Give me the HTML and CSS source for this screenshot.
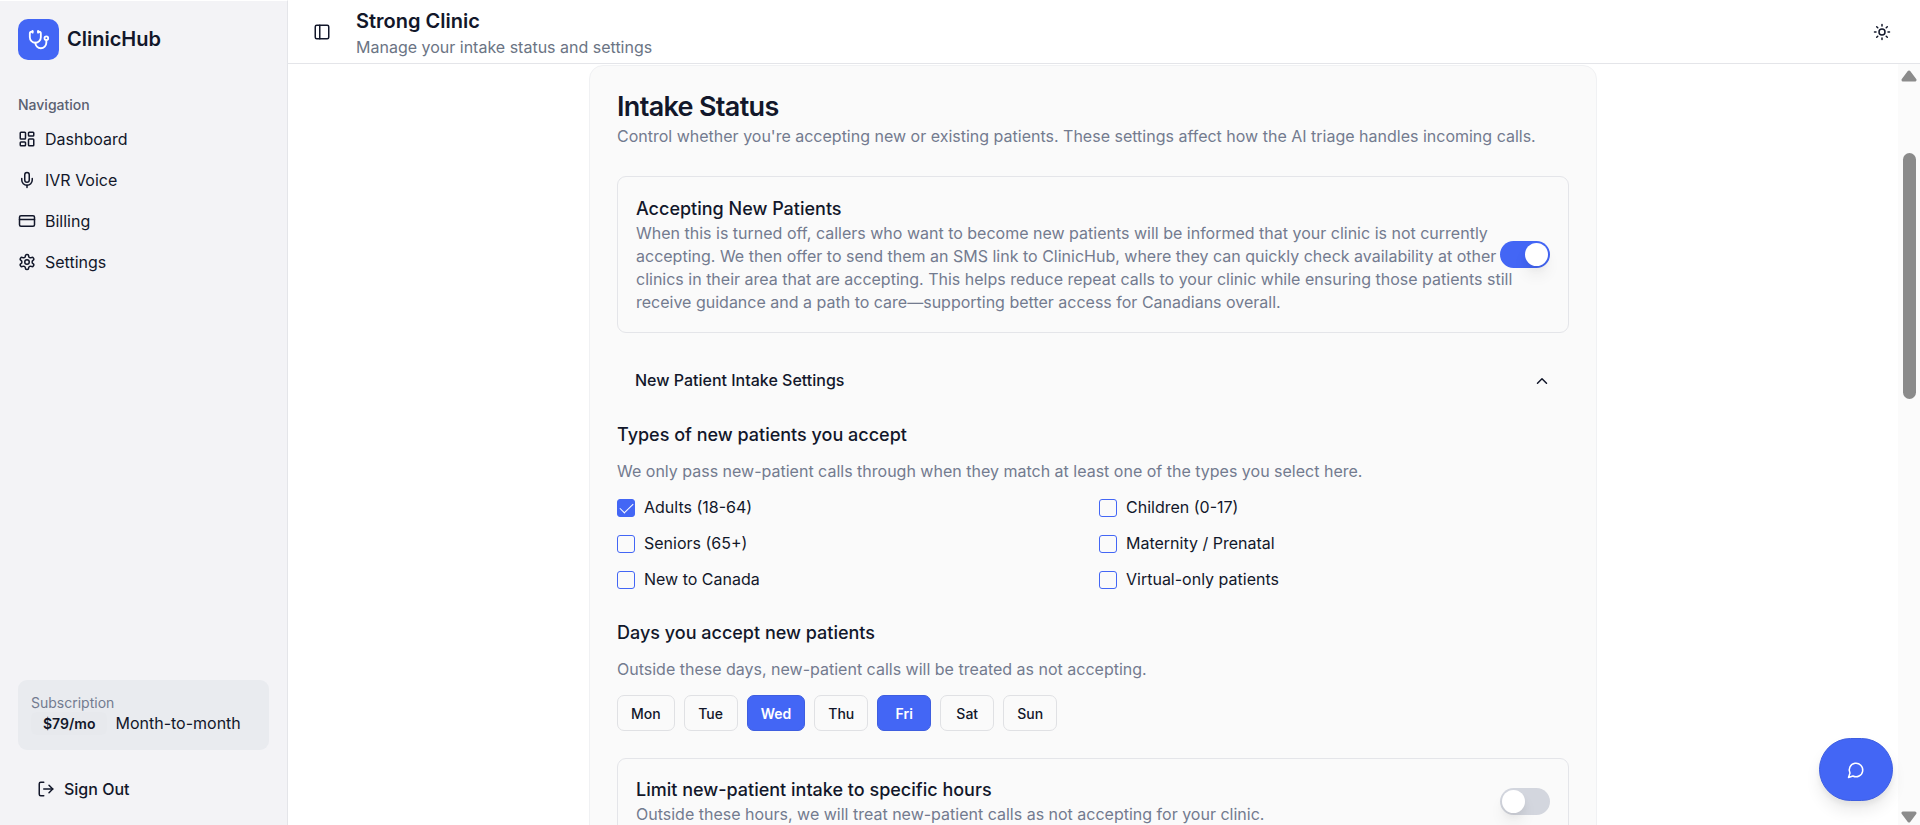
FILE: index.html
```html
<!DOCTYPE html>
<html lang="en">
<head>
<meta charset="utf-8">
<meta name="viewport" content="width=device-width, initial-scale=1">
<title>ClinicHub</title>
<link rel="stylesheet" href="styles.css">
</head>
<body>
<div class="app">
  <aside class="sidebar">
    <div class="brand">
      <span class="brand-mark">
        <svg class="icon icon-brand" viewBox="0 0 24 24"><path d="M11 2v2"/><path d="M5 2v2"/><path d="M5 3H4a2 2 0 0 0-2 2v4a6 6 0 0 0 12 0V5a2 2 0 0 0-2-2h-1"/><path d="M8 15a6 6 0 0 0 12 0v-3"/><circle cx="20" cy="10" r="2"/></svg>
      </span>
      <span class="brand-name">ClinicHub</span>
    </div>
    <nav class="nav" aria-label="Navigation">
      <p class="nav-label">Navigation</p>
      <a class="nav-link" href="#dashboard">
        <svg class="icon" viewBox="0 0 24 24"><rect width="7" height="9" x="3" y="3" rx="1"/><rect width="7" height="5" x="14" y="3" rx="1"/><rect width="7" height="9" x="14" y="12" rx="1"/><rect width="7" height="5" x="3" y="16" rx="1"/></svg>
        Dashboard</a>
      <a class="nav-link" href="#voice">
        <svg class="icon" viewBox="0 0 24 24"><path d="M12 19v3"/><path d="M19 10v2a7 7 0 0 1-14 0v-2"/><rect x="9" y="2" width="6" height="13" rx="3"/></svg>
        IVR Voice</a>
      <a class="nav-link" href="#billing">
        <svg class="icon" viewBox="0 0 24 24"><rect width="20" height="14" x="2" y="5" rx="2"/><path d="M2 10h20"/></svg>
        Billing</a>
      <a class="nav-link" href="#settings">
        <svg class="icon" viewBox="0 0 24 24"><path d="M12.22 2h-.44a2 2 0 0 0-2 2v.18a2 2 0 0 1-1 1.73l-.43.25a2 2 0 0 1-2 0l-.15-.08a2 2 0 0 0-2.73.73l-.22.38a2 2 0 0 0 .73 2.73l.15.1a2 2 0 0 1 1 1.72v.51a2 2 0 0 1-1 1.74l-.15.09a2 2 0 0 0-.73 2.73l.22.38a2 2 0 0 0 2.73.73l.15-.08a2 2 0 0 1 2 0l.43.25a2 2 0 0 1 1 1.73V20a2 2 0 0 0 2 2h.44a2 2 0 0 0 2-2v-.18a2 2 0 0 1 1-1.73l.43-.25a2 2 0 0 1 2 0l.15.08a2 2 0 0 0 2.73-.73l.22-.39a2 2 0 0 0-.73-2.73l-.15-.08a2 2 0 0 1-1-1.74v-.5a2 2 0 0 1 1-1.74l.15-.09a2 2 0 0 0 .73-2.73l-.22-.38a2 2 0 0 0-2.73-.73l-.15.08a2 2 0 0 1-2 0l-.43-.25a2 2 0 0 1-1-1.73V4a2 2 0 0 0-2-2z"/><circle cx="12" cy="12" r="3"/></svg>
        Settings</a>
    </nav>
    <div class="sidebar-foot">
      <section class="plan">
        <p class="plan-label">Subscription</p>
        <p class="plan-row"><span class="plan-price">$79/mo</span><span>Month-to-month</span></p>
      </section>
      <button class="sign-out" type="button">
        <svg class="icon" viewBox="0 0 24 24"><path d="m16 17 5-5-5-5"/><path d="M21 12H9"/><path d="M9 21H5a2 2 0 0 1-2-2V5a2 2 0 0 1 2-2h4"/></svg>
        Sign Out</button>
    </div>
  </aside>

  <div class="page">
    <header class="topbar">
      <button class="icon-button" type="button" aria-label="Toggle sidebar">
        <svg class="icon" viewBox="0 0 24 24"><rect width="18" height="18" x="3" y="3" rx="2"/><path d="M9 3v18"/></svg>
      </button>
      <div class="heading">
        <h1 class="page-title">Strong Clinic</h1>
        <p class="page-subtitle">Manage your intake status and settings</p>
      </div>
      <button class="icon-button" type="button" aria-label="Switch theme">
        <svg class="icon" viewBox="0 0 24 24"><circle cx="12" cy="12" r="4"/><path d="M12 2v2M12 20v2M4.93 4.93l1.41 1.41M17.66 17.66l1.41 1.41M2 12h2M20 12h2M6.34 17.66l-1.41 1.41M19.07 4.93l-1.41 1.41"/></svg>
      </button>
    </header>

    <div class="viewport">
      <main class="content">
        <section class="card">
          <h2 class="card-title">Intake Status</h2>
          <p class="muted">Control whether you're accepting new or existing patients. These settings affect how the AI triage handles incoming calls.</p>

          <div class="panel">
            <div class="panel-text">
              <label class="panel-title" for="accepting">Accepting New Patients</label>
              <p class="muted">When this is turned off, callers who want to become new patients will be informed that your clinic is not currently accepting. We then offer to send them an SMS link to ClinicHub, where they can quickly check availability at other clinics in their area that are accepting. This helps reduce repeat calls to your clinic while ensuring those patients still receive guidance and a path to care—supporting better access for Canadians overall.</p>
            </div>
            <input class="switch" type="checkbox" role="switch" id="accepting" checked>
          </div>

          <button class="disclosure" type="button" aria-expanded="true">
            New Patient Intake Settings
            <svg class="icon" viewBox="0 0 24 24"><path d="m18 15-6-6-6 6"/></svg>
          </button>

          <section class="group">
            <h3 class="group-title">Types of new patients you accept</h3>
            <p class="muted">We only pass new-patient calls through when they match at least one of the types you select here.</p>
            <div class="types">
              <label class="check"><input class="box" type="checkbox" checked>Adults (18-64)</label>
              <label class="check"><input class="box" type="checkbox">Children (0-17)</label>
              <label class="check"><input class="box" type="checkbox">Seniors (65+)</label>
              <label class="check"><input class="box" type="checkbox">Maternity / Prenatal</label>
              <label class="check"><input class="box" type="checkbox">New to Canada</label>
              <label class="check"><input class="box" type="checkbox">Virtual-only patients</label>
            </div>
          </section>

          <section class="group">
            <h3 class="group-title">Days you accept new patients</h3>
            <p class="muted">Outside these days, new-patient calls will be treated as not accepting.</p>
            <div class="days">
              <button class="day" type="button">Mon</button>
              <button class="day" type="button">Tue</button>
              <button class="day day-on" type="button" aria-pressed="true">Wed</button>
              <button class="day" type="button">Thu</button>
              <button class="day day-on" type="button" aria-pressed="true">Fri</button>
              <button class="day" type="button">Sat</button>
              <button class="day" type="button">Sun</button>
            </div>
          </section>

          <div class="panel panel-compact">
            <div class="panel-text">
              <label class="panel-title" for="hours">Limit new-patient intake to specific hours</label>
              <p class="muted">Outside these hours, we will treat new-patient calls as not accepting for your clinic.</p>
            </div>
            <input class="switch" type="checkbox" role="switch" id="hours">
          </div>
        </section>
      </main>
      <div class="scrollbar" aria-hidden="true">
        <svg class="arrow" viewBox="0 0 16 12"><path d="M8 2 14 10H2Z"/></svg>
        <div class="track"><div class="thumb"></div></div>
        <svg class="arrow" viewBox="0 0 16 12"><path d="M2 2H14L8 10Z"/></svg>
      </div>
    </div>
  </div>

  <button class="chat" type="button" aria-label="Open chat">
    <svg class="icon" viewBox="0 0 24 24"><path d="M7.9 20A9 9 0 1 0 4 16.1L2 22Z"/></svg>
  </button>
</div>
</body>
</html>
```
FILE: styles.css
```css
:root {
  --ink: #12172a;
  --muted: #737b8f;
  --line: #e4e5e9;
  --primary: #4366f5;
  --surface: #fafafa;
}

* {
  box-sizing: border-box;
  margin: 0;
}

body {
  font: 16px/23px Inter, "Liberation Sans", sans-serif;
  color: var(--ink);
  background: #fff;
}

button {
  font: inherit;
  color: inherit;
  background: none;
  border: 0;
  padding: 0;
  cursor: pointer;
}

.app {
  display: flex;
  height: 100vh;
  overflow: hidden;
}

.icon {
  width: 18px;
  height: 18px;
  flex: none;
  fill: none;
  stroke: currentColor;
  stroke-width: 2;
  stroke-linecap: round;
  stroke-linejoin: round;
}

/* Sidebar */
.sidebar {
  display: flex;
  flex-direction: column;
  flex: none;
  width: 288px;
  padding: 18px;
  background: #f3f3f6;
  border-top: 1px solid #fff;
  border-right: 1px solid var(--line);
}

.brand {
  display: flex;
  align-items: center;
  gap: 8px;
}

.brand-mark {
  display: grid;
  place-items: center;
  width: 41px;
  height: 41px;
  border-radius: 10px;
  color: #fff;
  background: var(--primary);
}

.icon-brand {
  width: 22px;
  height: 22px;
}

.brand-name {
  font-size: 20px;
  font-weight: 600;
}

.nav {
  display: flex;
  flex-direction: column;
  gap: 5px;
  margin-top: 27px;
}

.nav-label {
  padding-top: 7px;
  line-height: 22px;
  font-size: 14px;
  font-weight: 500;
  color: #5a6071;
}

.nav-link {
  display: flex;
  align-items: center;
  gap: 9px;
  height: 36px;
  color: inherit;
  text-decoration: none;
}

.sidebar-foot {
  margin-top: auto;
}

.plan {
  padding: 13px 13px 15px;
  border-radius: 9px;
  background: #e9ebef;
}

.plan-label {
  line-height: 19px;
  font-size: 14px;
  color: var(--muted);
}

.plan-row {
  display: flex;
  align-items: center;
  gap: 8px;
}

.plan-price {
  padding: 0 12px;
  border-radius: 6px;
  font-size: 14px;
  font-weight: 600;
  background: #e7e9ed;
}

.sign-out {
  display: flex;
  align-items: center;
  gap: 9px;
  width: 100%;
  height: 36px;
  margin-top: 21px;
  padding: 0 19px;
  font-weight: 500;
}

/* Top bar */
.page {
  display: flex;
  flex: 1;
  flex-direction: column;
  min-width: 0;
}

.topbar {
  display: flex;
  align-items: center;
  gap: 18px;
  flex: none;
  height: 64px;
  padding: 0 22px 0 18px;
  border-bottom: 1px solid var(--line);
}

.icon-button {
  display: grid;
  place-items: center;
  width: 32px;
  height: 32px;
}

.heading {
  flex: 1;
}

.page-title {
  padding-top: 1px;
  font-size: 20px;
  line-height: 30px;
  font-weight: 600;
}

.page-subtitle {
  color: #6b7484;
}

/* Scrolling area */
.viewport {
  display: flex;
  flex: 1;
  min-height: 0;
}

.content {
  flex: 1;
  min-width: 0;
  padding: 1px 27px;
  overflow: hidden;
}

.scrollbar {
  display: flex;
  flex-direction: column;
  align-items: center;
  flex: none;
  width: 22px;
  padding: 6px 0 2px;
  background: #fbfbfb;
}

.arrow {
  width: 16px;
  height: 12px;
  fill: #8b8b8b;
  stroke: #8b8b8b;
  stroke-width: 3;
  stroke-linejoin: round;
}

.track {
  flex: 1;
  padding-top: 71px;
}

.thumb {
  width: 13px;
  height: 246px;
  border-radius: 7px;
  background: #8b8b8b;
}

/* Card */
.card {
  max-width: 1008px;
  margin: 0 auto;
  padding: 27px;
  border: 1px solid #f0f1f3;
  border-radius: 14px;
  background: var(--surface);
}

.card-title {
  line-height: 27px;
  font-size: 27px;
  font-weight: 600;
  letter-spacing: -0.025em;
  padding-bottom: 5px;
}

.muted {
  color: var(--muted);
}

.panel {
  display: flex;
  align-items: center;
  justify-content: space-between;
  margin-top: 28px;
  padding: 18px;
  border: 1px solid var(--line);
  border-radius: 9px;
}

.panel-compact {
  margin-top: 27px;
}

/* Long lines may run on below the switch */
.panel-text {
  margin-right: -18px;
}

.panel-title {
  display: block;
  line-height: 27px;
  font-size: 18px;
  font-weight: 500;
}

.panel-compact .panel-title {
  line-height: 26px;
}

.switch {
  appearance: none;
  flex: none;
  display: flex;
  width: 50px;
  height: 27px;
  margin: 0;
  padding: 2px;
  border-radius: 14px;
  background: #d3d6de;
}

.switch::before {
  content: "";
  width: 23px;
  height: 23px;
  border-radius: 50%;
  background: #fff;
  box-shadow: 0 10px 15px rgb(0 0 0 / 6%), 0 4px 6px rgb(0 0 0 / 4%);
}

.switch:checked {
  justify-content: flex-end;
  background: var(--primary);
}

.disclosure {
  display: flex;
  align-items: center;
  justify-content: space-between;
  width: 100%;
  height: 41px;
  margin-top: 27px;
  padding: 0 18px;
  font-weight: 500;
}

.group {
  margin-top: 21px;
}

.group + .group {
  margin-top: 29px;
}

.group-title {
  margin-bottom: 13px;
  line-height: 25px;
  font-size: 18px;
  font-weight: 500;
}

.types {
  display: grid;
  grid-template-columns: 1fr 1fr;
  gap: 13px 12px;
  margin-top: 13px;
}

.check {
  display: flex;
  align-items: center;
  gap: 9px;
}

.box {
  appearance: none;
  display: grid;
  place-items: center;
  width: 18px;
  height: 18px;
  margin: 0;
  border: 1px solid var(--primary);
  border-radius: 3px;
}

.box:checked {
  background: var(--primary);
}

.box:checked::before {
  content: "";
  width: 12px;
  height: 6px;
  margin-bottom: 3px;
  border: solid #fff;
  border-width: 0 0 1px 1px;
  transform: rotate(-45deg);
}

.days {
  display: flex;
  flex-wrap: wrap;
  gap: 9px;
  margin-top: 14px;
}

.day {
  min-width: 54px;
  height: 36px;
  padding: 0 13px;
  border: 1px solid #e0e1e4;
  border-radius: 7px;
  font-size: 14px;
  font-weight: 500;
}

.day-on {
  font-weight: 600;
  color: #fff;
  border-color: #3e5ee0;
  background: var(--primary);
}

/* Chat launcher floats over the page */
.chat {
  position: fixed;
  right: 27px;
  bottom: 24px;
  display: grid;
  place-items: center;
  width: 74px;
  height: 63px;
  border: 1px solid #3e5ee0;
  border-radius: 32px;
  color: #fff;
  background: var(--primary);
  box-shadow: 0 10px 15px rgb(0 0 0 / 8%), 0 4px 6px rgb(0 0 0 / 6%);
}
```
